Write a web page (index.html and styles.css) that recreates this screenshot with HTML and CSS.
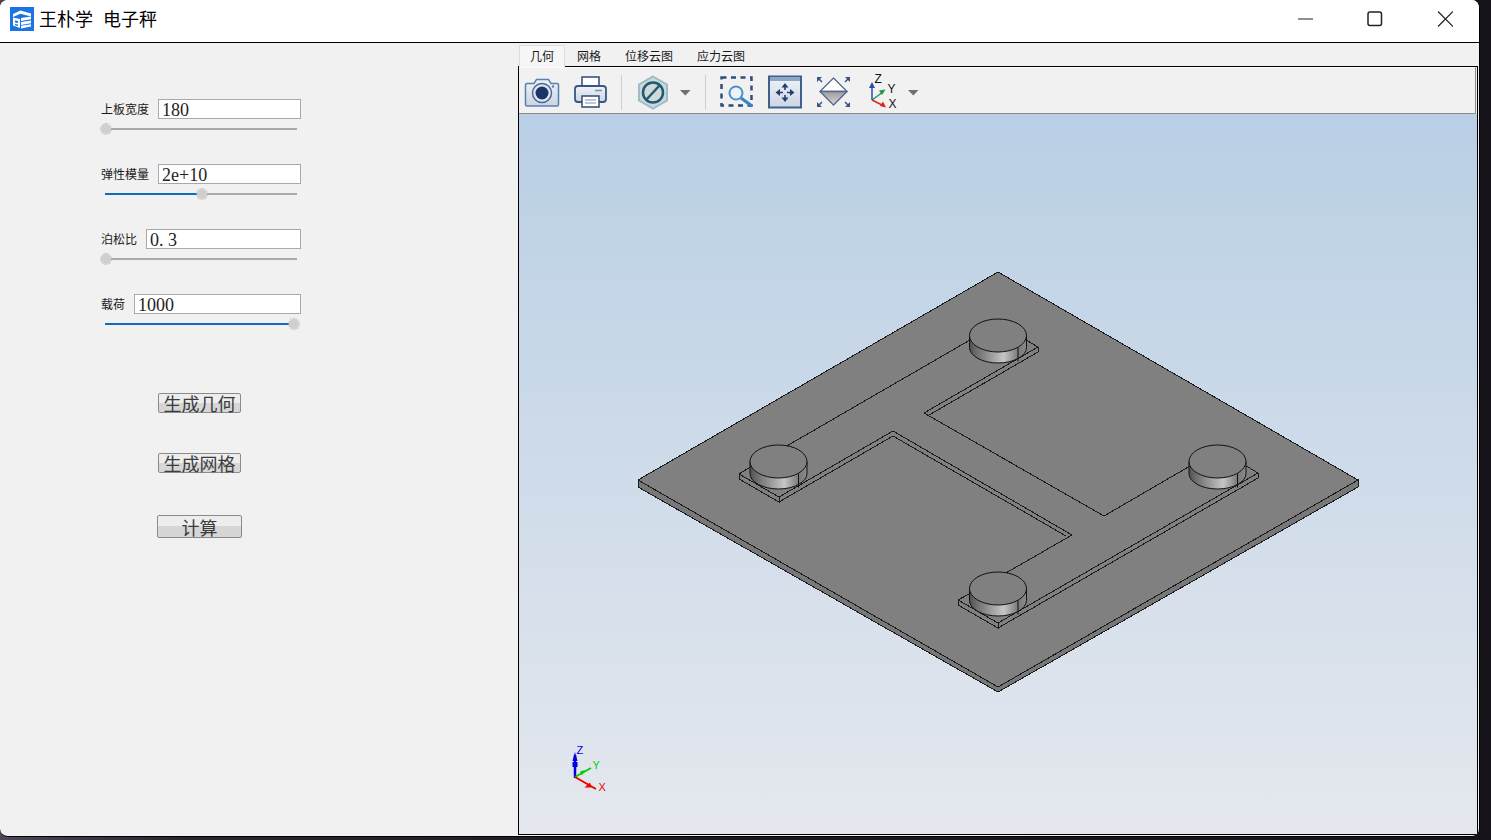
FILE: index.html
```html
<!DOCTYPE html>
<html lang="zh">
<head>
<meta charset="utf-8">
<title>王朴学 电子秤</title>
<link rel="stylesheet" href="styles.css">
</head>
<body>
<div class="window">
  <header class="titlebar">
    <svg class="app-icon" viewBox="0 0 24 24">
      <rect width="24" height="24" fill="#1b74e4"/>
      <path d="M3 7 10.500 3.500 21 6.500v3L10.500 6.800 3 10z" fill="#fff"/>
      <path d="M3 10.500l7 1.500v9l-7-2.500z" fill="#fff"/>
      <path d="M11 11 21 9.500v2.800L11 14zM11 15 21 13.400v2.800L11 18zM11 18.800 21 17.200v2.300L11 21.500z" fill="#fff"/>
      <path d="M5 13.500l3 .6v2l-3-.6zM5 17l3 .6v1.500l-3-.8z" fill="#1b74e4"/>
    </svg>
    <span class="app-title">王朴学<span class="title-gap"></span>电子秤</span>
    <div class="controls">
      <span class="ctl"><svg width="16" height="16" viewBox="0 0 16 16"><path d="M1 8h15" stroke="#222" stroke-width="1"/></svg></span>
      <span class="ctl"><svg width="16" height="16" viewBox="0 0 16 16"><rect x="1" y="1" width="13.500" height="13.500" rx="2" fill="none" stroke="#222" stroke-width="1.500"/></svg></span>
      <span class="ctl"><svg width="16" height="16" viewBox="0 0 16 16"><path d="M1 .500l15 15M16 .500l-15 15" stroke="#222" stroke-width="1.200"/></svg></span>
    </div>
  </header>
  <main class="main">
    <section class="form">
      <div class="param">
        <div class="param-row"><label class="param-label">上板宽度</label><input class="param-input" value="180"></div>
        <div class="slider"><div class="slider-fill" style="width:0%"></div><div class="slider-thumb" style="left:1px"></div></div>
      </div>
      <div class="param">
        <div class="param-row"><label class="param-label">弹性模量</label><input class="param-input" value="2e+10"></div>
        <div class="slider"><div class="slider-fill" style="width:50%"></div><div class="slider-thumb" style="left:97px"></div></div>
      </div>
      <div class="param">
        <div class="param-row"><label class="param-label">泊松比</label><input class="param-input" value="0. 3"></div>
        <div class="slider"><div class="slider-fill" style="width:0%"></div><div class="slider-thumb" style="left:1px"></div></div>
      </div>
      <div class="param">
        <div class="param-row"><label class="param-label">载荷</label><input class="param-input" value="1000"></div>
        <div class="slider"><div class="slider-fill" style="width:98%"></div><div class="slider-thumb" style="left:189px"></div></div>
      </div>
      <div class="actions">
        <button class="btn">生成几何</button>
        <button class="btn">生成网格</button>
        <button class="btn btn-large">计算</button>
      </div>
    </section>
    <section class="right">
      <nav class="tabs">
        <span class="tab tab-active">几何</span>
        <span class="tab">网格</span>
        <span class="tab">位移云图</span>
        <span class="tab">应力云图</span>
      </nav>
      <div class="viewer">
        <div class="toolbar">
          <svg class="tool-icons" viewBox="519 67 958 46">
            <defs>
              <linearGradient id="bodyg" x1="0" y1="0" x2="0" y2="1"><stop offset="0" stop-color="#f0f3f8"/><stop offset="1" stop-color="#cbd5e3"/></linearGradient>
              <linearGradient id="diag" x1="0" y1="0" x2="0" y2="1"><stop offset="0" stop-color="#9c9c9c"/><stop offset="1" stop-color="#d8d8d8"/></linearGradient>
            </defs>
            <!-- camera -->
            <path d="M527 83.500h7l2.500-4h12l2.500 4h6q1.500 0 1.500 1.500v19.500q0 1.500-1.500 1.500h-30q-1.500 0-1.500-1.500v-19.500q0-1.500 1.500-1.500z" fill="url(#bodyg)" stroke="#5a7fae" stroke-width="1.500"/>
            <circle cx="542" cy="93" r="9.500" fill="#dfe7f1" stroke="#4a6a96" stroke-width="1.500"/>
            <circle cx="542" cy="93" r="6.500" fill="#1c3568"/>
            <circle cx="553" cy="86.500" r="1.200" fill="#5a7fae"/>
            <!-- printer -->
            <rect x="582" y="77" width="17" height="11" fill="#fff" stroke="#3a5680" stroke-width="1.600"/>
            <rect x="575" y="86" width="31" height="16" rx="3" fill="url(#bodyg)" stroke="#3a5680" stroke-width="1.800"/>
            <path d="M595 90.500h7" stroke="#7a8fae" stroke-width="1.500"/>
            <rect x="582" y="96" width="17" height="11" fill="#fff" stroke="#3a5680" stroke-width="1.600"/>
            <path d="M585 100h11M585 103h11" stroke="#7a8fae"/>
            <!-- hexagon -->
            <path d="M653 76.500l14 8v16l-14 8-14-8v-16z" fill="#cbd9dd" stroke="#9dbcc4" stroke-width="2"/>
            <circle cx="653" cy="92.500" r="10" fill="#d4d8da" stroke="#1f5c72" stroke-width="2.500"/>
            <path d="M646 100l14-15" stroke="#1f5c72" stroke-width="2.500"/>
            <path d="M680 90h10.500l-5.200 5.500z" fill="#6f6f6f"/>
            <!-- separators -->
            <path d="M621.500 75v35M705.500 75v35" stroke="#cfcfcf"/>
            <!-- zoom window -->
            <rect x="721.500" y="77.500" width="30" height="28" fill="none" stroke="#2f4d7e" stroke-width="2.500" stroke-dasharray="5 4.500"/>
            <circle cx="736" cy="93" r="6.500" fill="#eef3f8" stroke="#4d94cc" stroke-width="2"/>
            <path d="M741 98l11 8" stroke="#2e86c8" stroke-width="3"/>
            <!-- pan -->
            <rect x="769" y="76.500" width="32" height="31" fill="url(#bodyg)" stroke="#405f8e" stroke-width="2"/>
            <rect x="770" y="77.500" width="30" height="3.500" fill="#8ea6c6"/>
            <path d="M785 87v3M785 95v3M780 92.500h3M787 92.500h3" stroke="#223f6e" stroke-width="1.600"/>
            <path d="M785 83l-3.500 4.500h7zM785 102l-3.500-4.500h7zM775.500 92.500l4.500-3.500v7zM794.500 92.500l-4.500-3.500v7z" fill="#223f6e"/>
            <!-- fit -->
            <path d="M833.500 78l13.500 13.500h-27z" fill="#fdfdfd" stroke="#556a8e" stroke-width="1.300" stroke-linejoin="round"/>
            <path d="M820 91.500h27l-13.500 13.500z" fill="url(#diag)" stroke="#556a8e" stroke-width="1.300" stroke-linejoin="round"/>
            <path d="M817 77h5l-5 5zM850 77h-5l5 5zM817 107h5l-5-5zM850 107h-5l5-5z" fill="#3b5680"/>
            <path d="M819 79l3 3M848 79l-3 3M819 105l3-3M848 105l-3-3" stroke="#3b5680" stroke-width="1.500"/>
            <!-- axes -->
            <path d="M872 100V86" stroke="#2451a8" stroke-width="1.500"/>
            <path d="M872 82l-3 6h6z" fill="#2451a8"/>
            <path d="M872 100l11-8" stroke="#1f9a4a" stroke-width="1.500"/>
            <path d="M885.500 89.500l-6.500 1 3 4.500z" fill="#1f9a4a"/>
            <path d="M872 100l12 6" stroke="#e02020" stroke-width="1.500"/>
            <path d="M886 107.500l-3-6-3 4.500z" fill="#e02020"/>
            <text x="874.500" y="83" class="axis-label">Z</text>
            <text x="887.500" y="93" class="axis-label">Y</text>
            <text x="888.500" y="107.500" class="axis-label">X</text>
            <path d="M908 90h10.500l-5.200 5.500z" fill="#6f6f6f"/>
          </svg>
        </div>
        <div class="viewport">
          <svg class="model" viewBox="519 114 958 720">
            <defs>
              <linearGradient id="cyl" x1="0" y1="0" x2="1" y2="0">
                <stop offset="0" stop-color="#505050"/>
                <stop offset=".12" stop-color="#6c6c6c"/>
                <stop offset=".6" stop-color="#c6c6c6"/>
                <stop offset=".85" stop-color="#7a7a7a"/>
                <stop offset="1" stop-color="#8a8a8a"/>
              </linearGradient>
              <g id="cylinder">
                <path d="M-28.500 0V12A28.500 15.500 0 0 0 28.500 12V0Z" fill="url(#cyl)" stroke="#111"/>
                <path d="M20 12V26" stroke="#111"/>
                <ellipse cx="0" cy="0" rx="28.500" ry="16.500" fill="#808080" stroke="#111"/>
              </g>
            </defs>
            <path class="plate-side" d="M638 480L998 687 1358 480V487L998 692 638 487Z"/>
            <path class="plate-top" d="M998 272L1358 480 998 687 638 480Z"/>
            <path class="edge" d="M970 340L785 447M759 462L739 474 779 497 893 431 1072 535 978 589 958 600 998 623 1258 473 1238 461M1190 466L1104 516 924 413 1038 347 1026 340"/>
            <path class="edge" d="M739 474V479L779 502V497M779 502L893 436 1066 536M958 600V605L998 628V623M998 628L1258 478V473M1038 347V352L928 415.600"/>
            <use href="#cylinder" x="998" y="335.500"/>
            <use href="#cylinder" x="778.500" y="461.500"/>
            <use href="#cylinder" x="1217.500" y="461.500"/>
            <use href="#cylinder" x="998" y="588.500"/>
            <!-- triad -->
            <path d="M575 778V755" stroke="#0000e0" stroke-width="2.500"/>
            <path d="M575 752l-2.500 9h5z" fill="#0000e0"/>
            <path d="M572.500 762h5v5h-5z" fill="#0000e0"/>
            <path d="M575 777l16-9" stroke="#00d000" stroke-width="2"/>
            <path d="M585 770l-5 1.500 2 4z" fill="#00d000"/>
            <path d="M575 777l21 12" stroke="#f00000" stroke-width="2"/>
            <path d="M590 782.500l1.500 5-7 0z" fill="#f00000"/>
            <text x="576.500" y="754" class="triad-label triad-z">Z</text>
            <text x="592.500" y="769" class="triad-label triad-y">Y</text>
            <text x="598.500" y="790.500" class="triad-label triad-x">X</text>
          </svg>
        </div>
      </div>
    </section>
  </main>
</div>
</body>
</html>
```
FILE: styles.css
```css
* { box-sizing: border-box; }
html, body { margin: 0; height: 100%; overflow: hidden; }
body {
  background: linear-gradient(90deg, #4e4656 0, #2a2630 12%, #1b1822 50%, #15121a 100%);
  font-family: "Noto Sans CJK SC", "Liberation Sans", sans-serif;
}
.window {
  width: 1480px;
  height: 837px;
  background: #f1f1f1;
  border-right: 1px solid #000;
  border-bottom: 1px solid #000;
  border-radius: 8px;
  overflow: hidden;
  display: flex;
  flex-direction: column;
}
.titlebar {
  height: 43px;
  flex: none;
  background: #fff;
  border-bottom: 1px solid #000;
  display: flex;
  align-items: center;
  padding-left: 10px;
}
.app-icon { width: 24px; height: 24px; margin-top: -4px; flex: none; }
.app-title { display: flex; margin-left: 5px; margin-top: -6px; font-size: 18px; line-height: 24px; color: #000; }
.title-gap { width: 10px; }
.controls { margin-left: auto; display: flex; margin-top: -4px; margin-right: -1px; }
.ctl { width: 70px; height: 30px; display: flex; align-items: center; justify-content: center; }
.main { flex: 1; display: flex; min-height: 0; }
.form { width: 518px; flex: none; padding: 56px 0 0 101px; }
.param { width: 200px; height: 65px; }
.param-row { display: flex; align-items: center; gap: 9px; height: 20px; }
.param-label { font-size: 12px; line-height: 20px; color: #1a1a1a; white-space: nowrap; }
.param-input {
  flex: 1;
  min-width: 0;
  height: 20px;
  padding: 2px 3px 0;
  border: 1px solid #a9a9a9;
  background: #fff;
  border-radius: 0;
  font-family: "Liberation Serif", serif;
  font-size: 18px;
  color: #222;
  outline: none;
}
.slider { position: relative; margin: 9px 0 0 4px; width: 192px; height: 2px; background: #aaa; }
.slider-fill { height: 2px; background: #0f6cbd; }
.slider-thumb {
  position: absolute;
  top: -5px;
  width: 12px;
  height: 12px;
  margin-left: -6px;
  border-radius: 50%;
  background: #cfcfcf;
  background-clip: padding-box;
  border: 1px dotted #b4b4b4;
}
.actions { display: flex; flex-direction: column; align-items: flex-start; padding: 34px 0 0 57px; }
.btn {
  width: 83px;
  height: 20px;
  padding: 0;
  border: 1px solid #8a8a8a;
  border-radius: 2px;
  background: linear-gradient(180deg, #ededed 0, #ededed 50%, #d6d6d6 50%, #d6d6d6 100%);
  font-family: "Noto Sans CJK SC", sans-serif;
  font-size: 18px;
  line-height: 16px;
  color: #3c3c3c;
  overflow: visible;
  white-space: nowrap;
  margin-bottom: 40px;
}
.btn-large { width: 85px; height: 23px; margin: 2px 0 0 -1px; }
.right { flex: 1; display: flex; flex-direction: column; padding: 0 1px 1px 0; min-width: 0; }
.tabs { height: 23px; flex: none; display: flex; padding: 2px 0 0 1px; }
.tab { padding: 0 12px; font-size: 12px; line-height: 21px; color: #1a1a1a; white-space: nowrap; }
.tab-active {
  padding: 0 10px;
  background: #f6f6f6;
  border: 1px solid #dcdcdc;
  border-bottom: none;
  height: 22px;
  line-height: 19px;
  position: relative;
  z-index: 1;
}
.viewer { flex: 1; min-height: 0; border: 1px solid #000; display: flex; flex-direction: column; }
.toolbar {
  height: 47px;
  flex: none;
  background: #f1f1f1;
  border-top: 1px solid #fbfbfb;
  border-right: 1px solid #8a8a8a;
  border-bottom: 1px solid #8a8a8a;
  margin-right: 1px;
}
.tool-icons { display: block; width: 958px; height: 46px; margin-top: -1px; overflow: visible; }
.axis-label { font-family: "Liberation Sans", sans-serif; font-size: 12px; fill: #111; }
.viewport { flex: 1; min-height: 0; background: linear-gradient(180deg, #b9cfe5 0, #e5e8ee 100%); }
.model { display: block; width: 958px; height: 720px; }
.plate-top { fill: #808080; stroke: #1a1a1a; stroke-width: 1; shape-rendering: crispEdges; }
.plate-side { fill: #787878; stroke: #1a1a1a; stroke-width: 1; shape-rendering: crispEdges; }
.edge { fill: none; stroke: #1a1a1a; stroke-width: 1; shape-rendering: crispEdges; }
.triad-label { font-family: "Liberation Sans", sans-serif; font-size: 11px; }
.triad-z { fill: #0000e0; }
.triad-y { fill: #00d000; }
.triad-x { fill: #f00000; }
```
